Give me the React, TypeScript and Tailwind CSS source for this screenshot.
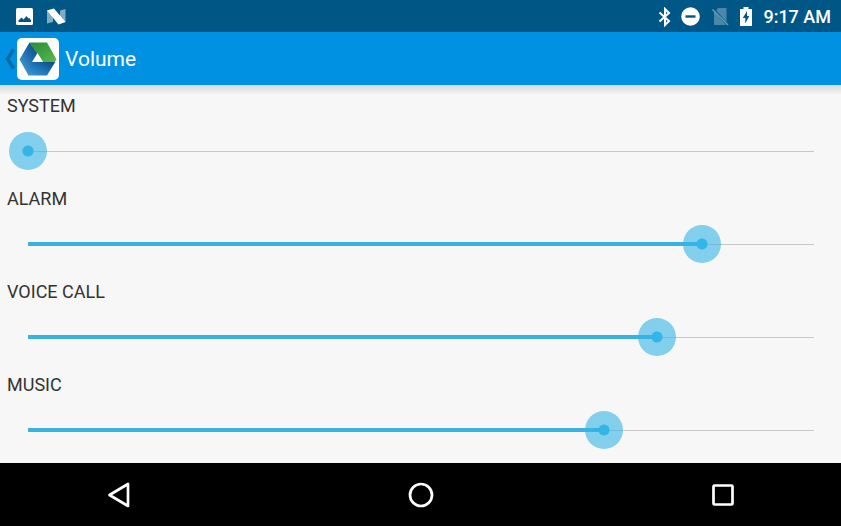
import { FC, useState } from "react";

interface StreamProps {
  id: string;
  label: string;
  max: number;
  initial: number;
}

const streams: StreamProps[] = [
  { id: "system", label: "SYSTEM", max: 7, initial: 0 },
  { id: "alarm", label: "ALARM", max: 7, initial: 6 },
  { id: "voice", label: "VOICE CALL", max: 5, initial: 4 },
  { id: "music", label: "MUSIC", max: 15, initial: 11 },
];

const StatusBar: FC = () => {
  return (
    <div className="flex h-8 items-center justify-between bg-[#005786] pl-4 pr-[10px] pt-px text-white">
      <div className="flex items-center gap-[14px]">
        <svg className="h-[17px] w-[17px]" viewBox="0 0 17 17">
          <rect width="17" height="17" rx="1.5" fill="#fff" />
          <path
            d="M2.5 14v-1.5L5.5 9.5l2 2L10.5 8l2 2.500 1-.5 1.500 2.500V14z"
            fill="#005786"
          />
        </svg>
        <svg className="h-[17px] w-[19px]" viewBox="0 0 19 17">
          <path d="M0 2.5L6 1v13L0 15.5z" fill="#7fabc5" />
          <path d="M13 2.5L18.5 1v13L13 15.5z" fill="#7fabc5" />
          <path d="M0 2.5L7 .5 18.5 14l-7 2.5z" fill="#fff" />
        </svg>
      </div>
      <div className="flex items-center">
        <svg className="mr-[10px] h-5 w-[13px]" viewBox="0 0 13 20">
          <path
            d="M1.5 5.5l9.5 8.5-4 4V2l4 4-9.5 8.5"
            fill="none"
            stroke="#fff"
            strokeWidth="2"
          />
        </svg>
        <svg className="mr-3 h-[19px] w-[19px]" viewBox="0 0 19 19">
          <circle cx="9.5" cy="9.5" r="9.3" fill="#fff" />
          <path d="M4.5 9.5h10" stroke="#005786" strokeWidth="2.4" />
        </svg>
        <svg className="mr-[11px] h-[19px] w-[17px]" viewBox="0 0 17 19">
          <path d="M6 1h8.5v14L4 3.5zM2 4.5L14 18H2z" fill="#4a87aa" />
          <path d="M.5 2.500l15.500 15.500" stroke="#6b9dba" strokeWidth="1.5" />
        </svg>
        <svg className="mr-[11px] h-5 w-3" viewBox="0 0 12 20">
          <path d="M3.500 0h5v2H12v17H0V2h3.500z" fill="#fff" />
          <path d="M7 4L2.800 11h2.500v5.500L9.300 9H7z" fill="#005786" />
        </svg>
        <time className="text-lg font-medium leading-5">9:17 AM</time>
      </div>
    </div>
  );
};

const AppLogo: FC = () => {
  return (
    <svg className="h-[42px] w-[42px]" viewBox="0 0 42 42">
      <defs>
        <linearGradient id="left" x1="1" y1="0" x2="0.2" y2="1">
          <stop offset="0" stopColor="#0b4a80" />
          <stop offset="0.4" stopColor="#1667a5" />
          <stop offset="1" stopColor="#4aa0d4" />
        </linearGradient>
        <linearGradient id="bottom" x1="0" y1="1" x2="1" y2="0">
          <stop offset="0" stopColor="#3f9bd6" />
          <stop offset="0.45" stopColor="#1d75b8" />
          <stop offset="1" stopColor="#0a4679" />
        </linearGradient>
        <linearGradient id="green" x1="0" y1="0" x2="1" y2="1">
          <stop offset="0" stopColor="#2b8a3a" />
          <stop offset="0.6" stopColor="#43a743" />
          <stop offset="1" stopColor="#5fb94c" />
        </linearGradient>
      </defs>
      <rect width="42" height="42" rx="5" fill="#fff" />
      <path d="M12.5 4.5L21 15.5 11.5 37.500 2.500 21.500z" fill="url(#left)" />
      <path d="M11 37.500l5-14h22.500l-8.500 14z" fill="url(#bottom)" />
      <path d="M12.5 4.500H30l9.500 17-2 2.500H26z" fill="url(#green)" />
      <path d="M20.500 15l5.500 9H15z" fill="#fff" />
    </svg>
  );
};

const VolumeSlider: FC<StreamProps> = ({ id, label, max, initial }) => {
  const [value, setValue] = useState(initial);

  return (
    <div>
      <label htmlFor={id} className="block px-[7px] text-lg leading-5">
        {label}
      </label>
      <div className="relative ml-[9px] mr-2 mt-4 h-[38px]">
        <div className="absolute inset-x-[19px] top-0 flex h-full items-center">
          <div className="h-px w-full bg-[#c8c8c8]" />
        </div>
        <div className="absolute inset-x-[19px] top-0 flex h-full items-center">
          <div
            className="h-1 bg-[#39b1e2]"
            style={{ width: `${(value / max) * 100}%` }}
          />
        </div>
        <input
          id={id}
          type="range"
          min={0}
          max={max}
          value={value}
          onChange={(e) => setValue(Number(e.target.value))}
          className="relative block h-[38px] w-full cursor-pointer appearance-none bg-transparent outline-none [&::-webkit-slider-thumb]:h-[38px] [&::-webkit-slider-thumb]:w-[38px] [&::-webkit-slider-thumb]:appearance-none [&::-webkit-slider-thumb]:rounded-full [&::-webkit-slider-thumb]:bg-[radial-gradient(circle,#33b5e5_5px,#33b5e599_6px)]"
        />
      </div>
    </div>
  );
};

const NavBar: FC = () => {
  return (
    <nav className="flex h-[63px] items-center justify-between bg-black px-[106px]">
      <button type="button" aria-label="Back">
        <svg className="h-[26px] w-[26px]" viewBox="0 0 26 26">
          <path
            d="M22 2v22L3.5 13z"
            fill="none"
            stroke="#fff"
            strokeWidth="2.7"
            strokeLinejoin="round"
          />
        </svg>
      </button>
      <button type="button" aria-label="Home">
        <svg className="h-[26px] w-[26px]" viewBox="0 0 26 26">
          <circle cx="13" cy="13" r="11" fill="none" stroke="#fff" strokeWidth="2.7" />
        </svg>
      </button>
      <button type="button" aria-label="Recent apps">
        <svg className="h-[26px] w-[26px]" viewBox="0 0 26 26">
          <rect
            x="4.5"
            y="3.5"
            width="19"
            height="19"
            rx="1"
            fill="none"
            stroke="#fff"
            strokeWidth="2.7"
          />
        </svg>
      </button>
    </nav>
  );
};

const App: FC = () => {
  return (
    <div className="flex min-h-screen flex-col bg-[#f7f7f7] font-['Roboto',sans-serif] text-[#333]">
      <StatusBar />
      <header className="flex h-[53px] items-center bg-[#0091e2] pl-[5px] text-white">
        <button type="button" aria-label="Navigate up" className="flex items-center gap-[2px]">
          <svg className="h-[22px] w-[10px]" viewBox="0 0 10 22">
            <path d="M8.500 1.500L2.500 11l6 9.500" fill="none" stroke="#0069a8" strokeWidth="3.500" />
          </svg>
          <AppLogo />
        </button>
        <h1 className="ml-[6px] text-[21px] leading-7">Volume</h1>
      </header>
      <main className="flex flex-1 flex-col gap-[19px] bg-linear-to-b from-[#d9d9d9] to-[#f7f7f7] to-[10px] pb-[14px] pt-[11px]">
        {streams.map((stream) => (
          <VolumeSlider key={stream.id} {...stream} />
        ))}
      </main>
      <NavBar />
    </div>
  );
};

export default App;
